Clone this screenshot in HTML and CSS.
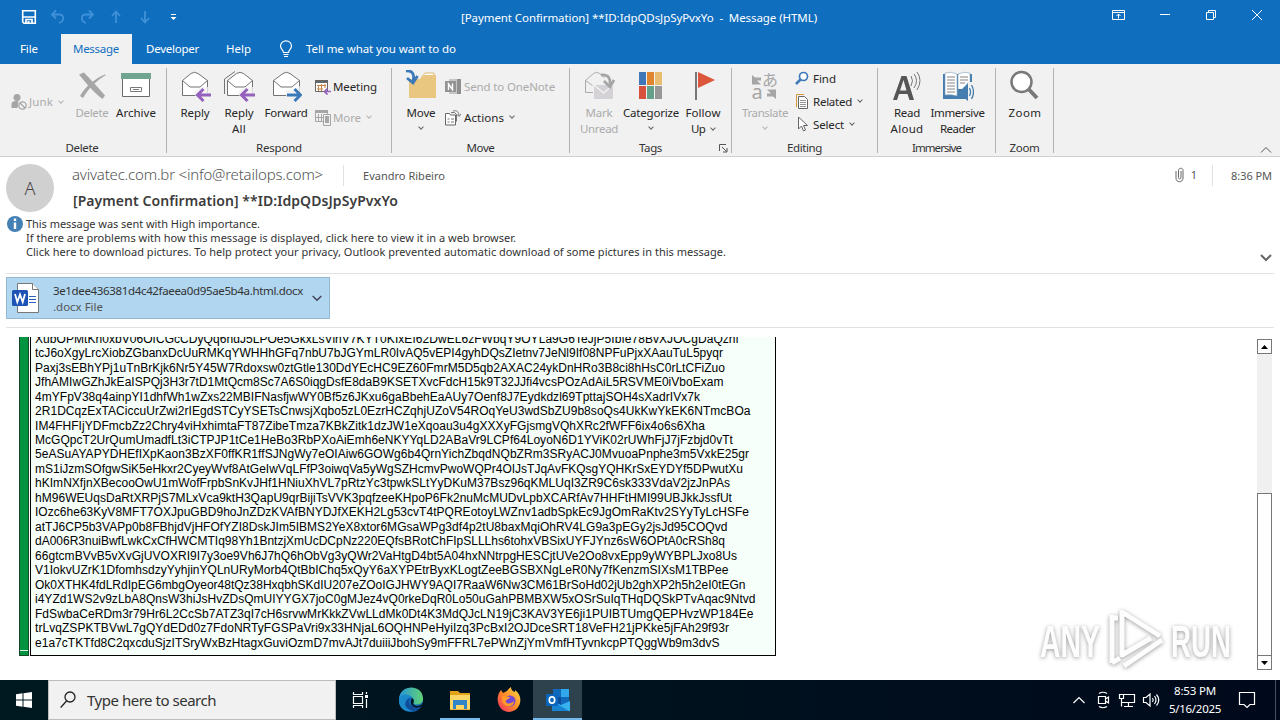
FILE: index.html
```html
<!DOCTYPE html>
<html lang="en">
<head>
  <meta charset="UTF-8">
  <title>[Payment Confirmation] - Message (HTML)</title>
  <link rel="stylesheet" href="styles.css">
</head>
<body>
  <header class="titlebar">
    <div class="quick">
      <svg width="16" height="16" viewBox="0 0 16 16"><path d="M1.7 1.7h12.6v12.6H3L1.7 13z" fill="none" stroke="#fff" stroke-width="1.6"/><path d="M2 8h12M5 14v-3.500h6V14" fill="none" stroke="#fff" stroke-width="1.700"/><path d="M6.500 12h2v2h-2z" fill="#fff"/></svg>
      <svg width="16" height="16" viewBox="0 0 16 16" class="dim"><path d="M6 1.500L2 5.500l4 4M2 5.500h7.500c5 0 5 7-.5 8.500"/></svg>
      <svg width="16" height="16" viewBox="0 0 16 16" class="dim"><path d="M10 1.500l4 4-4 4M14 5.500H6.500c-5 0-5 7 .5 8.500"/></svg>
      <svg width="16" height="16" viewBox="0 0 16 16" class="dim"><path d="M8 14V3M4 7l4-4.500L12 7"/></svg>
      <svg width="16" height="16" viewBox="0 0 16 16" class="dim"><path d="M8 2v11M4 9l4 4.500L12 9"/></svg>
      <svg width="16" height="16" viewBox="0 0 16 16"><path d="M5 5.500h5" stroke="#fff"/><path d="M4.500 8h6l-3 3z" fill="#fff"/></svg>
    </div>
    <div class="caption"><span data-w="356">[Payment Confirmation] **ID:IdpQDsJpSyPvxYo &nbsp;-&nbsp; Message (HTML)</span></div>
    <div class="controls">
      <svg width="14" height="12" viewBox="0 0 14 12"><path d="M.5 1.500h12v9H.5zM.5 3.500h12M6.500 9.500V5M4.500 7l2-2 2 2"/></svg>
      <svg width="12" height="12" viewBox="0 0 12 12"><path d="M1 5.500h10"/></svg>
      <svg width="12" height="12" viewBox="0 0 12 12"><path d="M1.500 3.500h7v7h-7zM3.500 3.500v-2h7v7h-2"/></svg>
      <svg width="12" height="12" viewBox="0 0 12 12"><path d="M1 1l10 10M11 1L1 11"/></svg>
    </div>
  </header>

  <nav class="tabs">
    <div class="tab tab-file"><span data-w="18">File</span></div>
    <div class="tab active"><span data-w="46">Message</span></div>
    <div class="tab"><span data-w="53">Developer</span></div>
    <div class="tab"><span data-w="25">Help</span></div>
    <div class="tell">
      <svg width="14" height="18" viewBox="0 0 14 18"><path d="M4.500 12.500c0-2-3-3.500-3-6.500a5.500 5.200 0 0 1 11 0c0 3-3 4.500-3 6.500zM4.500 14.500h5M5 16.500h4" fill="none" stroke="#fff" stroke-width="1.200"/></svg>
      <span data-w="150">Tell me what you want to do</span>
    </div>
  </nav>

  <section class="ribbon">
    <div class="group g-delete">
      <div class="tools">
        <div class="junk off">
          <svg width="16" height="18" viewBox="0 0 16 18"><circle cx="6" cy="4.500" r="3.500" fill="#a6a6a6"/><path d="M.5 15V11c0-2 2-3 4-3h3l-1 7z" fill="#a6a6a6"/><circle cx="11.500" cy="12.500" r="3.700" fill="#f1f1f1" stroke="#a6a6a6" stroke-width="1.300"/><path d="M9 10l5 5" stroke="#a6a6a6" stroke-width="1.300"/></svg>
          <span data-w="24">Junk</span><i class="caret"></i>
        </div>
        <div class="big w44 off">
          <svg width="32" height="32" viewBox="0 0 32 32"><path d="M3 4.500l5-2c5 5 15 16 21 23l-2.500 3.500C19 24 9 12 3 4.500z" fill="#a6a6a6"/><path d="M30 5C20 11 12 19 7 28l-3-2C9 17 18 9 29 4.500z" fill="#a6a6a6"/></svg>
          <span data-w="33">Delete</span>
        </div>
        <div class="big w44">
          <svg width="32" height="32" viewBox="0 0 32 32"><path d="M2.500 8.500h27v18h-27z" fill="#fff" stroke="#6b6b6b"/><path d="M1 3h30v6H1z" fill="#70a592"/><path d="M10.500 17.500h11v4h-11zM13 19.500h6" fill="none" stroke="#7a7a7a"/></svg>
          <span data-w="40">Archive</span>
        </div>
      </div>
      <div class="name"><span data-w="33">Delete</span></div>
    </div>

    <div class="group g-respond">
      <div class="tools">
        <div class="big w44">
          <svg width="32" height="32" viewBox="0 0 32 32"><path d="M3.500 10.500L12 3.500q3.500-2.500 7 0l9.500 7v15h-25z" fill="#fff" stroke="#737373"/><path d="M3.500 10.500L11 17h10l7.500-6.500" fill="none" stroke="#737373"/><path d="M15 22L22 17h9v14H18z" fill="#f1f1f1" opacity=".8"/><path d="M32 25H19M24.500 19L18.500 25l6 6" fill="none" stroke="#9561bc" stroke-width="3"/></svg>
          <span data-w="29">Reply</span>
        </div>
        <div class="big w44">
          <svg width="32" height="32" viewBox="0 0 32 32"><path d="M1.500 24V9L12 1.500" fill="none" stroke="#737373"/><path d="M4.500 10.500l9-7q3.500-2.500 7 0l9 7v15h-25z" fill="#fff" stroke="#737373"/><path d="M4.500 10.500L12 17h10l7.500-6.500" fill="none" stroke="#737373"/><path d="M15 22L22 17h9v14H18z" fill="#f1f1f1" opacity=".8"/><path d="M32 25H19M24.500 19L18.500 25l6 6" fill="none" stroke="#9561bc" stroke-width="3"/></svg>
          <span data-w="29">Reply</span><span data-w="14">All</span>
        </div>
        <div class="big w50">
          <svg width="32" height="32" viewBox="0 0 32 32"><path d="M3.500 10.500l9.500-7q3.500-2.500 7 0l9.500 7v15h-26z" fill="#fff" stroke="#737373"/><path d="M3.500 10.500L11 17h11l7.500-6.500" fill="none" stroke="#737373"/><path d="M16 20h8l6-4v15H16z" fill="#f1f1f1" opacity=".8"/><path d="M17 25h13M24.500 19l6 6-6 6" fill="none" stroke="#3c79b8" stroke-width="3"/></svg>
          <span data-w="43">Forward</span>
        </div>
        <div class="small two">
          <div class="item">
            <svg width="16" height="16" viewBox="0 0 16 16"><path d="M.5 1.500h12v11H.5z" fill="#fff" stroke="#666"/><path d="M0 1h13v3H0z" fill="#666"/><path d="M3.500 6v6M6.500 5v7M10 5v4M2 6.500h9M2 10h6" stroke="#c88442" fill="none"/><path d="M16 12.500H9.500M12.500 9.500l-3 3 3 3" stroke="#9561bc" stroke-width="1.700" fill="none"/></svg>
            <span data-w="44">Meeting</span>
          </div>
          <div class="item off">
            <svg width="16" height="16" viewBox="0 0 16 16"><path d="M.5 1.500h12v10H.5zM3.500 4v7M6.500 4v7M1 7.500h7" fill="none" stroke="#a6a6a6"/><path d="M0 0h13v3H0z" fill="#a6a6a6"/><path d="M8.500 4.500h7v11h-7z" fill="#f1f1f1" stroke="#a6a6a6"/><path d="M10 6h4v7h-4z" fill="#a6a6a6"/></svg>
            <span data-w="28">More</span><i class="caret"></i>
          </div>
        </div>
      </div>
      <div class="name"><span data-w="46">Respond</span></div>
    </div>

    <div class="group g-move">
      <div class="tools">
        <div class="big w46">
          <svg width="32" height="32" viewBox="0 0 32 32"><path d="M16 8l4-5h9v6z" fill="#fff" stroke="#e0b76c"/><path d="M4 9h11l4-4h12v23H4z" fill="#eac781"/><path d="M1 1c6-1 9 3 7 10M2 8l6 5 4.500-7" fill="none" stroke="#3c79b8" stroke-width="2.800"/></svg>
          <span data-w="29">Move</span><i class="caret"></i>
        </div>
        <div class="small two">
          <div class="item off">
            <svg width="16" height="16" viewBox="0 0 16 16"><path d="M4 0h11v15H4z" fill="#c6c6c6"/><path d="M12 0h4v15h-4z" fill="#8f8f8f"/><path d="M0 2h11v11H0z" fill="#939393"/><path d="M3.500 11V5l4 5.500V4.500" fill="none" stroke="#fff" stroke-width="1.400"/></svg>
            <span data-w="91">Send to OneNote</span>
          </div>
          <div class="item">
            <svg width="16" height="16" viewBox="0 0 16 16"><path d="M.5 3.500h4l1 1.500h5v10H.5z" fill="#fff" stroke="#666"/><path d="M2.500 9h2M6 9h3M2.500 12h2M6 12h3" stroke="#777"/><path d="M6 2.500h3.500l2 2v7M8 1c4-1 6 1 6 5M11.500 4L14 6.500 16 4" fill="none" stroke="#777"/></svg>
            <span data-w="40">Actions</span><i class="caret"></i>
          </div>
        </div>
      </div>
      <div class="name"><span data-w="28">Move</span></div>
    </div>

    <div class="group g-tags">
      <div class="tools">
        <div class="big w46 off">
          <svg width="32" height="32" viewBox="0 0 32 32"><path d="M2.500 22.500v-12l8-7q3-2.500 6 0l5 4M2.500 22.500H10M2.500 10.500l7 5" fill="none" stroke="#aaa"/><path d="M11 15h19v14H11z" fill="#d4d2d6"/><path d="M11 15l9.500 8L30 15" fill="none" stroke="#f1f1f1" stroke-width="1.500"/><path d="M18 5c7-1 10 3 9 11M21 11l6 6 4-7" fill="none" stroke="#a6a6a6" stroke-width="2.800"/></svg>
          <span data-w="27">Mark</span><span data-w="38">Unread</span>
        </div>
        <div class="big w58">
          <svg width="32" height="32" viewBox="0 0 32 32"><path d="M4 2h7v13H4z" fill="#4176b8"/><path d="M12 2h7v13h-7z" fill="#df852f"/><path d="M20 2h7v13h-7z" fill="#e8bd72"/><path d="M4 16h7v13H4z" fill="#d8513c"/><path d="M12 16h7v13h-7z" fill="#65a18a"/><path d="M20 16h7v13h-7z" fill="#979797"/></svg>
          <span data-w="56">Categorize</span><i class="caret"></i>
        </div>
        <div class="big w46">
          <svg width="32" height="32" viewBox="0 0 32 32"><path d="M9 2v28" stroke="#777" stroke-width="2"/><path d="M11 2l17 8-17 8z" fill="#dc563b"/></svg>
          <span data-w="35">Follow</span><span class="with-caret"><b data-w="14">Up</b><i class="caret"></i></span>
        </div>
      </div>
      <div class="name"><span data-w="23">Tags</span>
        <svg class="launcher" width="9" height="9" viewBox="0 0 9 9"><path d="M.5 7V.5H7M3 3l4.500 4.500M8 4v4H4" fill="none" stroke="#555"/></svg>
      </div>
    </div>

    <div class="group g-editing">
      <div class="tools">
        <div class="big w50 off">
          <svg class="translate" width="32" height="32" viewBox="0 0 32 32"><path d="M3 5l3 2.500h6v3H8l4 4H3zM27 29l-3-2.500h-6v-3h4l-4-4h9z" fill="#a6a6a6"/><text x="2.500" y="29" class="glyph-a">a</text><text x="13" y="15.500" class="glyph-jp">あ</text></svg>
          <span data-w="46">Translate</span><i class="caret"></i>
        </div>
        <div class="small three">
          <div class="item">
            <svg width="14" height="16" viewBox="0 0 14 16"><circle cx="8.500" cy="5.500" r="4" fill="#fff" stroke="#3c79b8" stroke-width="1.700"/><path d="M5.500 8.500L1 13" stroke="#3c79b8" stroke-width="2.500"/></svg>
            <span data-w="23">Find</span>
          </div>
          <div class="item">
            <svg width="14" height="16" viewBox="0 0 14 16"><path d="M1.500 13V.5H9" fill="none" stroke="#d9973f"/><path d="M3.500 2.500h6l3 3v9h-9z" fill="#fff" stroke="#666"/><path d="M5 6.500h6M5 8.500h6M5 10.500h6M5 12.500h6" stroke="#777" stroke-width=".8"/></svg>
            <span data-w="39">Related</span><i class="caret"></i>
          </div>
          <div class="item">
            <svg width="14" height="16" viewBox="0 0 14 16"><path d="M3.500 0v12l3-3 2 5 2-1-2-4.500h4z" fill="#fff" stroke="#666"/></svg>
            <span data-w="31">Select</span><i class="caret"></i>
          </div>
        </div>
      </div>
      <div class="name"><span data-w="35">Editing</span></div>
    </div>

    <div class="group g-immersive">
      <div class="tools">
        <div class="big w46">
          <svg width="32" height="32" viewBox="0 0 32 32"><path d="M2 30L10.500 6h5L23 30h-4.500l-2-6H8l-2 6zM9 20.500h6.500L12.500 10z" fill="#555"/><path d="M20 6q3 4.500 0 10M23 4q5 6.500 0 14M26 2q6 8 0 18" fill="none" stroke="#777"/></svg>
          <span data-w="26">Read</span><span data-w="33">Aloud</span>
        </div>
        <div class="big w55">
          <svg width="32" height="32" viewBox="0 0 32 32"><path d="M1 4h29v25H1z" fill="#447dae"/><path d="M3 3q6-2 12 1v22q-6-2-12-1zM16 4q6-3 12-1v22q-6-1-12 1z" fill="#fff" stroke="#7d9ebb" stroke-width=".6"/><path d="M5 7h8M5 10h8M5 13h8M5 16h8M5 19h8M5 22h8M18 7h8M18 10h8M18 13h5" stroke="#777" stroke-width=".9"/><path d="M24 12h8v19h-8z" fill="#f1f1f1"/><path d="M16 19h4l6-6v18l-6-5h-4z" fill="#447dae"/><path d="M27.500 18q2 4 0 8M29.500 15q4 7 0 14" stroke="#447dae" fill="none" stroke-width="1.300"/></svg>
          <span data-w="54">Immersive</span><span data-w="35">Reader</span>
        </div>
      </div>
      <div class="name"><span data-w="49">Immersive</span></div>
    </div>

    <div class="group g-zoom">
      <div class="tools">
        <div class="big w46">
          <svg width="32" height="32" viewBox="0 0 32 32"><circle cx="12.500" cy="12" r="10" fill="#fff" stroke="#797979" stroke-width="2.500"/><path d="M19.500 19l8.500 9" stroke="#797979" stroke-width="4"/></svg>
          <span data-w="33">Zoom</span>
        </div>
      </div>
      <div class="name"><span data-w="30">Zoom</span></div>
    </div>
    <svg class="collapse" width="12" height="8" viewBox="0 0 12 8"><path d="M1 6.500l5-5 5 5" fill="none" stroke="#555"/></svg>
  </section>

  <section class="mail-head">
    <div class="avatar">A</div>
    <div class="who">
      <div class="sender-row">
        <span class="sender" data-w="251">avivatec.com.br &lt;info@retailops.com&gt;</span>
        <span class="to"><b data-w="82">Evandro Ribeiro</b></span>
        <span class="clip">
          <svg width="9" height="16" viewBox="0 0 9 16"><path d="M6 4v6.500c0 2-2.500 2-2.500 0V3.500c0-3 4.500-3 4.500 0V11c0 5-7 5-7 0V4" fill="none" stroke="#666"/></svg>1
        </span>
        <span class="time"><b data-w="41">8:36 PM</b></span>
      </div>
      <div class="subject"><span data-w="325">[Payment Confirmation] **ID:IdpQDsJpSyPvxYo</span></div>
    </div>
  </section>

  <section class="infobar">
    <svg width="16" height="16" viewBox="0 0 16 16"><circle cx="8" cy="8" r="8" fill="#4580b5"/><path d="M8 2.500v2.500M8 6.500V13" stroke="#fff" stroke-width="2.400"/></svg>
    <div class="notes">
      <div><span data-w="234">This message was sent with High importance.</span></div>
      <div><span data-w="490">If there are problems with how this message is displayed, click here to view it in a web browser.</span></div>
      <div><span data-w="700">Click here to download pictures. To help protect your privacy, Outlook prevented automatic download of some pictures in this message.</span></div>
    </div>
    <svg class="expand" width="12" height="8" viewBox="0 0 12 8"><path d="M1 1l5 5 5-5" fill="none" stroke="#666" stroke-width="2"/></svg>
  </section>

  <section class="attachments">
    <div class="file">
      <svg width="28" height="30" viewBox="0 0 28 30"><path d="M5.500.5h15l6 6v23h-21z" fill="#fff" stroke="#777"/><path d="M20.500.5v6h6" fill="#fff" stroke="#777"/><path d="M17 13.500h7M17 16.500h7M17 19.500h7" stroke="#2b5fb8"/><rect x="0" y="7" width="16" height="16" rx="1.500" fill="#1e52b5"/><path d="M3 11l2.300 8L8 11.500l2.700 7.500L13 11" fill="none" stroke="#fff" stroke-width="1.800"/></svg>
      <div class="file-text">
        <div><span data-w="250">3e1dee436381d4c42faeea0d95ae5b4a.html.docx</span></div>
        <div class="kind"><span data-w="50">.docx File</span></div>
      </div>
      <svg width="10" height="7" viewBox="0 0 10 7"><path d="M.7 1L5 5.300 9.300 1" fill="none" stroke="#445" stroke-width="1.500"/></svg>
    </div>
  </section>

  <main class="message">
    <div class="stripe"></div>
    <div class="block">
      <p><span data-w="704">XubOPMtKh0xbV06OfCGcCDyQq6hdJ5LPOe5GkxLsVihV7KYT0KIxEf62DwEL6zFWbqY9OYLa9G6TeJjP5Ibfe78BvXJOCgDaQzhf</span></p>
      <p><span data-w="688">tcJ6oXgyLrcXiobZGbanxDcUuRMKqYWHHhGFq7nbU7bJGYmLR0IvAQ5vEPI4gyhDQsZIetnv7JeNl9If08NPFuPjxXAauTuL5pyqr</span></p>
      <p><span data-w="690">Paxj3sEBhYPj1uTnBrKjk6Nr5Y45W7Rdoxsw0ztGtle130DdYEcHC9EZ60FmrM5D5qb2AXAC24ykDnHRo3B8ci8hHsC0rLtCFiZuo</span></p>
      <p><span data-w="688.5">JfhAMIwGZhJkEaISPQj3H3r7tD1MtQcm8Sc7A6S0iqgDsfE8daB9KSETXvcFdcH15k9T32JJfi4vcsPOzAdAiL5RSVME0iVboExam</span></p>
      <p><span data-w="665">4mYFpV38q4ainpYI1dhfWh1wZxs22MBIFNasfjwWY0Bf5z6JKxu6gaBbehEaAUy7Oenf8J7Eydkdzl69TpttajSOH4sXadrIVx7k</span></p>
      <p><span data-w="715.5">2R1DCqzExTACiccuUrZwi2rIEgdSTCyYSETsCnwsjXqbo5zL0EzrHCZqhjUZoV54ROqYeU3wdSbZU9b8soQs4UkKwYkEK6NTmcBOa</span></p>
      <p><span data-w="670">IM4FHFIjYDFmcbZz2Chry4viHxhimtaFT87ZibeTmza7KBkZitk1dzJW1eXqoau3u4gXXXyFGjsmgVQhXRc2fWFF6ix4o6s6Xha</span></p>
      <p><span data-w="698">McGQpcT2UrQumUmadfLt3iCTPJP1tCe1HeBo3RbPXoAiEmh6eNKYYqLD2ABaVr9LCPf64LoyoN6D1YViK02rUWhFjJ7jFzbjd0vTt</span></p>
      <p><span data-w="714">5eASuAYAPYDHEfIXpKaon3BzXF0ffKR1ffSJNgWy7eOIAiw6GOWg6b4QrnYichZbqdNQbZRm3SRyACJ0MvuoaPnphe3m5VxkE25gr</span></p>
      <p><span data-w="708">mS1iJzmSOfgwSiK5eHkxr2CyeyWvf8AtGeIwVqLFfP3oiwqVa5yWgSZHcmvPwoWQPr4OIJsTJqAvFKQsgYQHKrSxEYDYf5DPwutXu</span></p>
      <p><span data-w="695">hKImNXfjnXBecooOwU1mWofFrpbSnKvJHf1HNiuXhVL7pRtzYc3tpwkSLtYyDKuM37Bsz96qKMLUqI3ZR9C6sk333VdaV2jzJnPAs</span></p>
      <p><span data-w="697">hM96WEUqsDaRtXRPjS7MLxVca9ktH3QapU9qrBijiTsVVK3pqfzeeKHpoP6Fk2nuMcMUDvLpbXCARfAv7HHFtHMI99UBJkkJssfUt</span></p>
      <p><span data-w="714">IOzc6he63KyV8MFT7OXJpuGBD9hoJnZDzKVAfBNYDJfXEKH2Lg53cvT4tPQREotoyLWZnv1adbSpkEc9JgOmRaKtv2SYyTyLcHSFe</span></p>
      <p><span data-w="692.5">atTJ6CP5b3VAPp0b8FBhjdVjHFOfYZI8DskJIm5IBMS2YeX8xtor6MGsaWPg3df4p2tU8baxMqiOhRV4LG9a3pEGy2jsJd95COQvd</span></p>
      <p><span data-w="690">dA006R3nuiBwfLwkCxCfHWCMTIq98Yh1BntzjXmUcDCpNz220EQfsBRotChFIpSLLLhs6tohxVBSixUYFJYnz6sW6OPtA0cRSh8q</span></p>
      <p><span data-w="702">66gtcmBVvB5vXvGjUVOXRI9I7y3oe9Vh6J7hQ6hObVg3yQWr2VaHtgD4bt5A04hxNNtrpgHESCjtUVe2Oo8vxEpp9yWYBPLJxo8Us</span></p>
      <p><span data-w="693.5">V1IokvUZrK1DfomhsdzyYyhjinYQLnURyMorb4QtBbIChq5xQyY6aXYPEtrByxKLogtZeeBGSBXNgLeR0Ny7fKenzmSIXsM1TBPee</span></p>
      <p><span data-w="710.5">Ok0XTHK4fdLRdIpEG6mbgOyeor48tQz38HxqbhSKdIU207eZOoIGJHWY9AQI7RaaW6Nw3CM61BrSoHd02jUb2ghXP2h5h2eI0tEGn</span></p>
      <p><span data-w="720.5">i4YZd1WS2v9zLbA8QnsW3hiJsHvZDsQmUIYYGX7joC0gMJez4vQ0rkeDqR0Lo50uGahPBMBXW5xOSrSuIqTHqDQSkPTvAqac9Ntvd</span></p>
      <p><span data-w="718.5">FdSwbaCeRDm3r79Hr6L2CcSb7ATZ3qI7cH6srvwMrKkkZVwLLdMk0Dt4K3MdQJcLN19jC3KAV3YE6ji1PUIBTUmgQEPHvzWP184Ee</span></p>
      <p><span data-w="694">trLvqZSPKTBVwL7gQYdEDd0z7FdoNRTyFGSPaVri9x33HNjaL6OQHNPeHyiIzq3PcBxI2OJDceSRT18VeFH21jPKke5jFAh29f93r</span></p>
      <p><span data-w="684.5">e1a7cTKTfd8C2qxcduSjzITSryWxBzHtagxGuviOzmD7mvAJt7duiiiJbohSy9mFFRL7ePWnZjYmVmfHTyvnkcpPTQggWb9m3dvS</span></p>
    </div>
    <div class="scroll">
      <div class="arrow"><svg width="7" height="4" viewBox="0 0 7 4"><path d="M0 4L3.500 0 7 4z"/></svg></div>
      <div class="thumb"></div>
      <div class="arrow"><svg width="7" height="4" viewBox="0 0 7 4"><path d="M0 0l3.500 4L7 0z"/></svg></div>
    </div>
    <svg class="watermark" width="200" height="68" viewBox="0 0 200 68">
      <text x="2" y="51" textLength="60" lengthAdjust="spacingAndGlyphs">ANY</text>
      <path d="M84 34V6l38 24M74 9v48M74 12h6M84 18v31l29-17M74 57l8-5M86 60l38-26"/>
      <text x="133" y="51" textLength="60" lengthAdjust="spacingAndGlyphs">RUN</text>
    </svg>
  </main>

  <footer class="taskbar">
    <div class="start"><svg width="16" height="16" viewBox="0 0 16 16"><path d="M0 2.300L6.500 1.300v6.200H0zM7.500 1.200L16 0v7.500H7.500zM0 8.500h6.500v6.200L0 13.700zM7.500 8.500H16V16l-8.500-1.200z" fill="#fff"/></svg></div>
    <div class="search">
      <svg width="16" height="18" viewBox="0 0 16 18"><circle cx="10" cy="6" r="5" fill="none" stroke="#222" stroke-width="1.300"/><path d="M6.500 10L.7 16.500" stroke="#222" stroke-width="1.300"/></svg>
      <span data-w="129">Type here to search</span>
    </div>
    <div class="app view"><svg width="18" height="18" viewBox="0 0 18 18"><path d="M1.500 1v2.500h9V1M1.500 17v-2.500h9V17M1.500 5.500h9v7h-9zM14.500 1v2M14.500 8v9" fill="none" stroke="#fff" stroke-width="1.200"/><path d="M13 4h3v3h-3z" fill="#fff"/></svg></div>
    <div class="app">
      <svg width="26" height="26" viewBox="0 0 26 26">
        <defs><linearGradient id="edgeTop"><stop offset="0" stop-color="#2795d8"/><stop offset="1" stop-color="#61d273"/></linearGradient></defs>
        <circle cx="13" cy="13" r="12" fill="#1267b4"/><path d="M1 12C2-3 24-3 25 11c1 7-8 8-10 5 3-7-8-11-14-4z" fill="url(#edgeTop)"/><path d="M1 13c1-7 11-7 13-2-7-2-8 8 1 12-7 4-15-3-14-10z" fill="#1b8acb"/><path d="M13 11c-5 2-2 11 10 8-3 6-11 6-15 1-2-4 0-8 5-9z" fill="#124c98"/><path d="M14 11c4 3 0 5 2 7 3 2 7 1 9-2l-1 3c-7 4-14-1-10-8z" fill="#001720"/>
      </svg>
    </div>
    <div class="app open">
      <svg width="24" height="24" viewBox="0 0 24 24"><path d="M2 3h8l2 2h10v3H2z" fill="#e3a21a"/><path d="M2 7h20v14H2z" fill="#fcd667"/><path d="M5 12h14v9h-3v-4H8v4H5z" fill="#3284c9"/><path d="M2 21h20v1H2z" fill="#e8b440"/></svg>
    </div>
    <div class="app">
      <svg width="26" height="26" viewBox="0 0 26 26">
        <defs><linearGradient id="fox" x1="1" y1="0" x2="0" y2="1"><stop offset="0" stop-color="#ffe04a"/><stop offset=".5" stop-color="#ff8b25"/><stop offset="1" stop-color="#f5286e"/></linearGradient></defs>
        <path d="M3 6l2-3 2 3 4-2q1-2 4-4 0 4 4 5V3c5 4 6 8 5 13C21 28 4 28 2 15c-1-3 0-6 1-9z" fill="url(#fox)"/><circle cx="14" cy="14" r="5.500" fill="#7547d5"/><path d="M6 9l8 1c-1 3-5 2-4 5 2 3 6 1 8-1 0 7-10 7-12 0z" fill="#ff9b28"/>
      </svg>
    </div>
    <div class="app open current">
      <svg width="26" height="24" viewBox="0 0 26 24"><path d="M8 1h16v16H8z" fill="#1268bb"/><path d="M16 1h8v8h-8z" fill="#31a7ec"/><path d="M8 9h8v8H8z" fill="#0b4f9d"/><path d="M7 13l9 4 9-4v10H7z" fill="#38b2ef"/><path d="M7 13l17 10H7z" fill="#1684d3"/><rect x="1" y="6" width="12" height="12" rx="1" fill="#0965bd"/><ellipse cx="7" cy="12" rx="2.700" ry="3.100" fill="none" stroke="#fff" stroke-width="1.700"/></svg>
    </div>
    <div class="tray">
      <svg width="24" height="18" viewBox="0 0 24 18"><path d="M6.500 12L12 6.500 17.500 12"/></svg>
      <svg width="24" height="18" viewBox="0 0 24 18"><path d="M7.500 5.500h7v7h-7zM14.500 8l3-2v6l-3-2M8 2.500q4-2.500 8 0M8 15.500q4 2.500 8 0"/></svg>
      <svg width="24" height="18" viewBox="0 0 24 18"><path d="M8.500 3.500h11v8h-13V7M13.500 11.500v4M9 15.500h9M4.500 3.500h4v4h-4zM6.500 7.500v8"/></svg>
      <svg width="24" height="18" viewBox="0 0 24 18"><path d="M4.500 6.500H7L11 3v12l-4-3.500H4.500zM13.500 7q1.500 2 0 4M15.500 5q3 4 0 8M17.500 3.500q4.500 5.500 0 11"/></svg>
      <div class="clock"><span data-w="42">8:53 PM</span><span data-w="52">5/16/2025</span></div>
      <svg class="notify" width="18" height="18" viewBox="0 0 18 18"><path d="M1.500 1.500h15v12H12l-3 3-3-3H1.500z"/></svg>
    </div>
  </footer>
  <script>
    // keep every label at its fixed width by adjusting the tracking
    document.querySelectorAll('[data-w]').forEach(el => {
      const natural = el.getBoundingClientRect().width;
      const gap = (el.dataset.w - natural) / el.textContent.length;
      el.style.letterSpacing = gap + 'px';
    });
  </script>
</body>
</html>
```
FILE: styles.css
```css
* {
  box-sizing: border-box;
}
body {
  margin: 0;
  width: 1280px;
  height: 720px;
  overflow: hidden;
  background: #fff;
  color: #262626;
  font: 11.5px/16px "Noto Sans", "Noto Sans CJK JP", sans-serif;
  white-space: nowrap;
}
svg {
  flex: none;
}
b {
  font-weight: normal;
}

/* title bar */
.titlebar {
  display: grid;
  grid-template-columns: 1fr auto 1fr;
  height: 34px;
  background: #106ebe;
  color: #fff;
}
.quick {
  display: flex;
  gap: 13px;
  padding: 9px 0 0 21px;
}
.dim path {
  fill: none;
  stroke: #3e91d8;
  stroke-width: 1.8;
}
.caption {
  padding: 10px 2px 0 0;
}
.controls {
  display: flex;
  justify-content: flex-end;
}
.controls svg {
  width: 46px;
  margin-top: 9px;
}
.controls path {
  fill: none;
  stroke: #fff;
}

/* tabs */
.tabs {
  display: flex;
  height: 30px;
  background: #106ebe;
  color: #fff;
  line-height: 30px;
}
.tab {
  padding: 0 13px 0 14px;
}
.tab-file {
  margin: 0 10px 0 6px;
}
.tab.active {
  padding: 0 12px;
  width: 71px;
  background: #f1f1f1;
  color: #106ebe;
}
.tell {
  display: flex;
  align-items: center;
  gap: 13px;
  padding-left: 15px;
}

/* ribbon */
.ribbon {
  position: relative;
  display: flex;
  height: 93px;
  padding-top: 4px;
  background: #f1f1f1;
  border-bottom: 1px solid #d0d0d0;
}
.group {
  height: 85px;
  border-right: 1px solid #b3b3b3;
}
.g-delete { width: 167px; }
.g-respond { width: 225px; }
.g-move { width: 178px; }
.g-tags { width: 162px; }
.g-editing { width: 146px; }
.g-immersive { width: 118px; }
.g-zoom { width: 58px; }
.tools {
  display: flex;
  height: 72px;
  padding-left: 6px;
}
.g-delete .tools { padding-left: 11px; }
.g-editing .tools { padding-left: 8px; }
.name {
  position: relative;
  text-align: center;
  color: #333;
}
.g-delete .name {
  padding-right: 2px;
}
.launcher {
  position: absolute;
  right: 3px;
  top: 4px;
}
.big {
  display: flex;
  flex-direction: column;
  align-items: center;
}
.big > svg {
  margin: 2px 0 3px;
}
.w44 { width: 44px; }
.w46 { width: 46px; }
.w50 { width: 50px; }
.w55 { width: 55px; }
.w58 { width: 58px; }
.off {
  color: #ababab;
}
.junk {
  display: flex;
  align-items: center;
  width: 59px;
  gap: 2px;
  height: 68px;
}
.caret {
  flex: none;
  width: 4px;
  height: 4px;
  margin: 0 3px 3px 6px;
  border: solid #666;
  border-width: 0 1px 1px 0;
  transform: rotate(45deg);
}
.junk .caret {
  margin-left: 4px;
}
.off .caret {
  border-color: #b5b5b5;
}
.big > .caret {
  margin: 4px 0 0;
}
.with-caret {
  display: flex;
  align-items: center;
  padding-left: 3px;
}
.small {
  display: grid;
  align-content: start;
}
.small.two {
  grid-auto-rows: 31px;
  padding: 3px 0 0 4px;
}
.small.two .item svg {
  margin-right: 2px;
}
.g-move .small.two {
  padding-left: 1px;
}
.g-move .small.two .item svg {
  margin-right: 3px;
}
.small.three {
  grid-auto-rows: 23px;
  margin-top: -1px;
  padding-left: 5px;
}
.item {
  display: flex;
  align-items: center;
}
.item svg {
  margin-right: 4px;
}
.translate {
  overflow: visible;
}
.glyph-a {
  font: 20px "Noto Sans", sans-serif;
  fill: #a6a6a6;
}
.glyph-jp {
  font: 16px "Noto Sans CJK JP", sans-serif;
  fill: #a6a6a6;
}
.collapse {
  position: absolute;
  right: 8px;
  bottom: 2px;
}

/* message header */
.mail-head {
  display: flex;
  height: 60px;
  padding: 7px 8px 0 6px;
}
.avatar {
  width: 48px;
  height: 48px;
  border-radius: 50%;
  background: #d0d0d0;
  color: #444;
  font-size: 18px;
  font-weight: 300;
  line-height: 49px;
  text-align: center;
}
.who {
  flex: 1;
  margin-left: 18px;
}
.sender-row {
  display: flex;
  align-items: center;
  height: 22px;
  font-size: 11px;
  color: #555;
}
.sender {
  margin: -2px 20px 0 0;
  font-size: 15px;
  font-weight: 300;
}
.to, .time {
  height: 21px;
  line-height: 22px;
  border-left: 1px solid #e1e1e1;
}
.to { padding-left: 19px; }
.time { padding-left: 18px; }
.clip {
  display: flex;
  align-items: center;
  gap: 7px;
  margin: -1px 15px 0 auto;
}
.subject {
  margin: 5px 0 0 1px;
  font-size: 14px;
  line-height: 20px;
  font-weight: 600;
  color: #3c3c3c;
}
.infobar {
  display: flex;
  position: relative;
  height: 57px;
  margin: 0 6px;
  border-bottom: 1px solid #e1e1e1;
}
.infobar > svg:first-child {
  margin: -1px 3px 0 1px;
}
.notes {
  font-size: 11px;
  line-height: 14px;
  color: #333;
}
.expand {
  position: absolute;
  right: 2px;
  top: 37px;
}
.attachments {
  height: 54px;
  margin: 0 6px;
  padding-top: 3px;
  border-bottom: 1px solid #e1e1e1;
}
.file {
  display: flex;
  align-items: center;
  width: 324px;
  height: 42px;
  padding: 0 7px 0 5px;
  background: #b0d6f0;
  border: 1px solid #93b8d2;
}
.file-text {
  flex: 1;
  margin: 2px 0 0 13px;
  color: #333;
}
.file-text .kind {
  color: #555;
}

/* message body */
.message {
  position: relative;
  display: flex;
  height: 352px;
  padding: 9px 8px 0 19px;
}
.stripe {
  width: 10px;
  height: 319px;
  border: 1px solid #17482a;
  border-top: 0;
  background: linear-gradient(#009440 313px, #d9f5e2 313px, #d9f5e2 314px, #009440 314px);
}
.block {
  display: flex;
  flex-direction: column;
  justify-content: flex-end;
  width: 746px;
  height: 319px;
  margin-left: 1px;
  padding: 0 0 5px 4px;
  overflow: hidden;
  border: 1px solid #000;
  border-top: 0;
  background: #f6fffa;
  color: #000;
  font: 12px/14.48px "Liberation Sans", Arial, sans-serif;
}
.block p {
  flex: none;
  height: 14.48px;
  margin: 0;
}
.scroll {
  display: flex;
  flex-direction: column;
  justify-content: space-between;
  width: 15px;
  height: 331px;
  margin: 2px 0 0 auto;
  background: #f0f0f0;
}
.arrow {
  display: flex;
  align-items: center;
  justify-content: center;
  height: 15px;
  border: 1px solid #777;
  background: #fff;
}
.thumb {
  height: 162px;
  margin: auto 0 0;
  border: 1px solid #777;
  border-bottom: 0;
  background: #fff;
}
.watermark {
  position: absolute;
  left: 1038px;
  top: 278px;
  filter: drop-shadow(0 1px 2px #999);
}
.watermark text {
  fill: #fdfdfd;
  font: bold 45px "Liberation Sans", sans-serif;
}
.watermark path {
  fill: none;
  stroke: #fdfdfd;
  stroke-width: 5;
  stroke-linejoin: round;
}

/* taskbar */
.taskbar {
  display: flex;
  height: 40px;
  background: linear-gradient(90deg, #001820, #00121e 50%, #00091b);
  color: #fff;
}
.start {
  display: flex;
  align-items: center;
  justify-content: center;
  width: 48px;
}
.search {
  display: flex;
  align-items: center;
  gap: 11px;
  width: 288px;
  padding-left: 11px;
  background: #f1f1f1;
  border: 1px solid #bdbdbd;
  color: #333;
  font-size: 15px;
}
.app {
  display: flex;
  align-items: center;
  justify-content: center;
  width: 49px;
}
.app.view {
  width: 50px;
}
.app.open {
  background: linear-gradient(#76b9ed, #76b9ed) center bottom / 40px 2px no-repeat;
}
.app.current {
  background: linear-gradient(#76b9ed, #76b9ed) center bottom / 100% 2px no-repeat #2e424e;
}
.tray {
  display: flex;
  align-items: center;
  width: 209px;
  margin-left: auto;
  margin-right: 4px;
  border-right: 1px solid #47505c;
}
.tray path {
  fill: none;
  stroke: #fff;
  stroke-width: 1.2;
}
.clock {
  display: flex;
  flex-direction: column;
  align-items: center;
  width: 64px;
  line-height: 18px;
}
.notify {
  margin-left: 11px;
}
```
